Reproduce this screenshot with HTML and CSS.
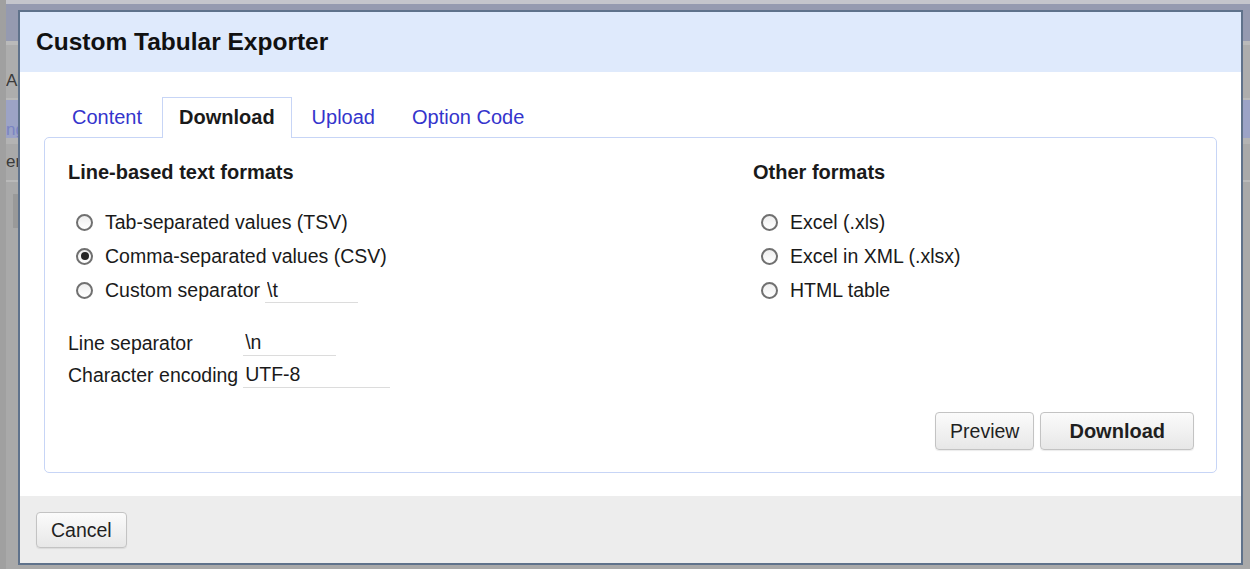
FILE: index.html
```html
<!DOCTYPE html>
<html lang="en">
<head>
<meta charset="utf-8">
<title>Custom Tabular Exporter</title>
<link rel="stylesheet" href="styles.css">
</head>
<body>
  <!-- dimmed application behind the modal -->
  <div class="backdrop">
    <div class="bd-top"></div>
    <div class="bd-band bd-grey"><span class="bd-word">Al</span></div>
    <div class="bd-band bd-blue"><span class="bd-word">ng</span></div>
    <div class="bd-band bd-grey2"><span class="bd-word">er</span></div>
    <div class="bd-fill"><div class="bd-scroll"></div></div>
  </div>

  <div class="dialog">
    <div class="dialog-header">Custom Tabular Exporter</div>

    <div class="dialog-body">
      <ul class="tabs">
        <li class="tab">Content</li>
        <li class="tab tab-active">Download</li>
        <li class="tab">Upload</li>
        <li class="tab">Option Code</li>
      </ul>

      <div class="tab-panel">
        <div class="formats">
          <div class="col">
            <h3 class="col-title">Line-based text formats</h3>
            <label class="option"><input type="radio" name="fmt" class="radio">Tab-separated values (TSV)</label>
            <label class="option"><input type="radio" name="fmt" class="radio" checked>Comma-separated values (CSV)</label>
            <label class="option"><input type="radio" name="fmt" class="radio">Custom separator <input type="text" class="field field-sep" value="\t"></label>

            <div class="settings">
              <span class="setting-label">Line separator</span>
              <span><input type="text" class="field field-sep" value="\n"></span>
              <span class="setting-label">Character encoding</span>
              <span><input type="text" class="field field-enc" value="UTF-8"></span>
            </div>
          </div>

          <div class="col">
            <h3 class="col-title">Other formats</h3>
            <label class="option"><input type="radio" name="fmt" class="radio">Excel (.xls)</label>
            <label class="option"><input type="radio" name="fmt" class="radio">Excel in XML (.xlsx)</label>
            <label class="option"><input type="radio" name="fmt" class="radio">HTML table</label>
          </div>
        </div>

        <div class="panel-actions">
          <button class="btn">Preview</button>
          <button class="btn btn-primary">Download</button>
        </div>
      </div>
    </div>

    <div class="dialog-footer">
      <button class="btn">Cancel</button>
    </div>
  </div>
</body>
</html>
```

FILE: styles.css
```css
* {
  box-sizing: border-box;
}

html, body {
  margin: 0;
  height: 100%;
}

body {
  font-family: "Liberation Sans", Arial, sans-serif;
  font-size: 19.5px;
  color: #1a1a1a;
  background: #a7a7a7;
  overflow: hidden;
  position: relative;
}

/* ---------- dimmed page behind the modal ---------- */
.backdrop {
  display: flex;
  flex-direction: column;
  height: 100%;
  border-left: 6px solid #a0a0a0;
}

.bd-top {
  height: 45px;
  background: #959ab0;
  border-top: 4px solid #c4c5cc;
  border-bottom: 4px solid #bababa;
}

.bd-band {
  font-size: 17px;
  white-space: nowrap;
  overflow: hidden;
}

.bd-grey {
  height: 55px;
  padding-top: 26px;
  background: #adadad;
  color: #3a3a3a;
  border-bottom: 2px solid #b9b9b9;
}

.bd-blue {
  height: 44px;
  padding-top: 20px;
  background: #9ca3c6;
  color: #7a84c2;
  border-bottom: 6px solid #b3b3b3;
}

.bd-grey2 {
  height: 38px;
  padding-top: 8px;
  background: #a9a9a9;
  color: #3a3a3a;
  border-bottom: 2px solid #b9b9b9;
}

.bd-word {
  display: inline-block;
  padding-left: 0;
}

.bd-fill {
  flex: 1;
  background: #a9a9a9;
  padding: 12px 0 0 7px;
}

.bd-scroll {
  width: 6px;
  height: 34px;
  background: #999;
}

/* ---------- modal dialog ---------- */
.dialog {
  position: absolute;
  left: 18px;
  top: 10px;
  width: 1225px;
  height: 555px;
  border: 2px solid #5f728b;
  background: #fff;
  display: flex;
  flex-direction: column;
}

.dialog-header {
  height: 60px;
  line-height: 60px;
  padding-left: 16px;
  background: #dfeafc;
  font-size: 24.5px;
  font-weight: bold;
  color: #111;
}

.dialog-body {
  flex: 1;
  padding: 25px 24px 0 24px;
}

/* ---------- tabs ---------- */
.tabs {
  list-style: none;
  margin: 0 0 -1px 0;
  padding: 0 0 0 11px;
  display: flex;
  gap: 3px;
  position: relative;
  z-index: 1;
  font-size: 20px;
}

.tab {
  height: 41px;
  line-height: 39px;
  padding: 0 16px;
  border: 1px solid transparent;
  border-bottom: none;
  color: #3434cc;
}

.tab-active {
  background: #fff;
  border-color: #c7d5f6;
  color: #1a1a1a;
  font-weight: bold;
}

.tab-panel {
  height: 336px;
  border: 1px solid #c7d5f6;
  border-radius: 5px;
  padding: 23px 22px 22px 23px;
  display: flex;
  flex-direction: column;
}

/* ---------- format chooser ---------- */
.formats {
  display: grid;
  grid-template-columns: 685px 1fr;
}

.col-title {
  margin: 0 0 22px 0;
  font-size: 20px;
  font-weight: bold;
  line-height: 22px;
}

.option {
  display: flex;
  align-items: center;
  height: 34px;
  white-space: nowrap;
}

.radio {
  appearance: none;
  -webkit-appearance: none;
  width: 17px;
  height: 17px;
  margin: 0 12px 0 8px;
  border: 2px solid #707070;
  border-radius: 50%;
  background: linear-gradient(#eeeeee, #fff);
  position: relative;
  flex: none;
}

.radio:checked::after {
  content: "";
  position: absolute;
  left: 2.5px;
  top: 2.5px;
  width: 8px;
  height: 8px;
  border-radius: 50%;
  background: #262626;
}

.field {
  font: inherit;
  color: #1a1a1a;
  height: 25px;
  padding: 0 2px;
  border: none;
  border-bottom: 1px solid #dcdcdc;
  background: transparent;
  outline: none;
}

.option .field {
  margin-left: 5px;
  align-self: flex-start;
  margin-top: 5px;
}

.field-sep {
  width: 93px;
}

.field-enc {
  width: 147px;
}

.settings {
  margin-top: 20px;
  display: grid;
  grid-template-columns: auto 1fr;
  column-gap: 5px;
  grid-auto-rows: 32px;
  align-items: center;
}

.setting-label {
  white-space: nowrap;
}

/* ---------- buttons ---------- */
.panel-actions {
  margin-top: auto;
  display: flex;
  justify-content: flex-end;
  gap: 6px;
}

.btn {
  font: inherit;
  color: #1f1f1f;
  height: 38px;
  padding: 0 14px;
  border: 1px solid #c3c3c3;
  border-radius: 4px;
  background: linear-gradient(#fbfbfb, #e7e7e7);
  box-shadow: 0 1px 1px rgba(0, 0, 0, 0.08);
  cursor: pointer;
}

.btn-primary {
  font-size: 20px;
  font-weight: bold;
  padding: 0 28px;
}

.dialog-footer {
  height: 67px;
  background: #ededed;
  padding: 16px 0 0 16px;
}

.dialog-footer .btn {
  height: 36px;
}
```
